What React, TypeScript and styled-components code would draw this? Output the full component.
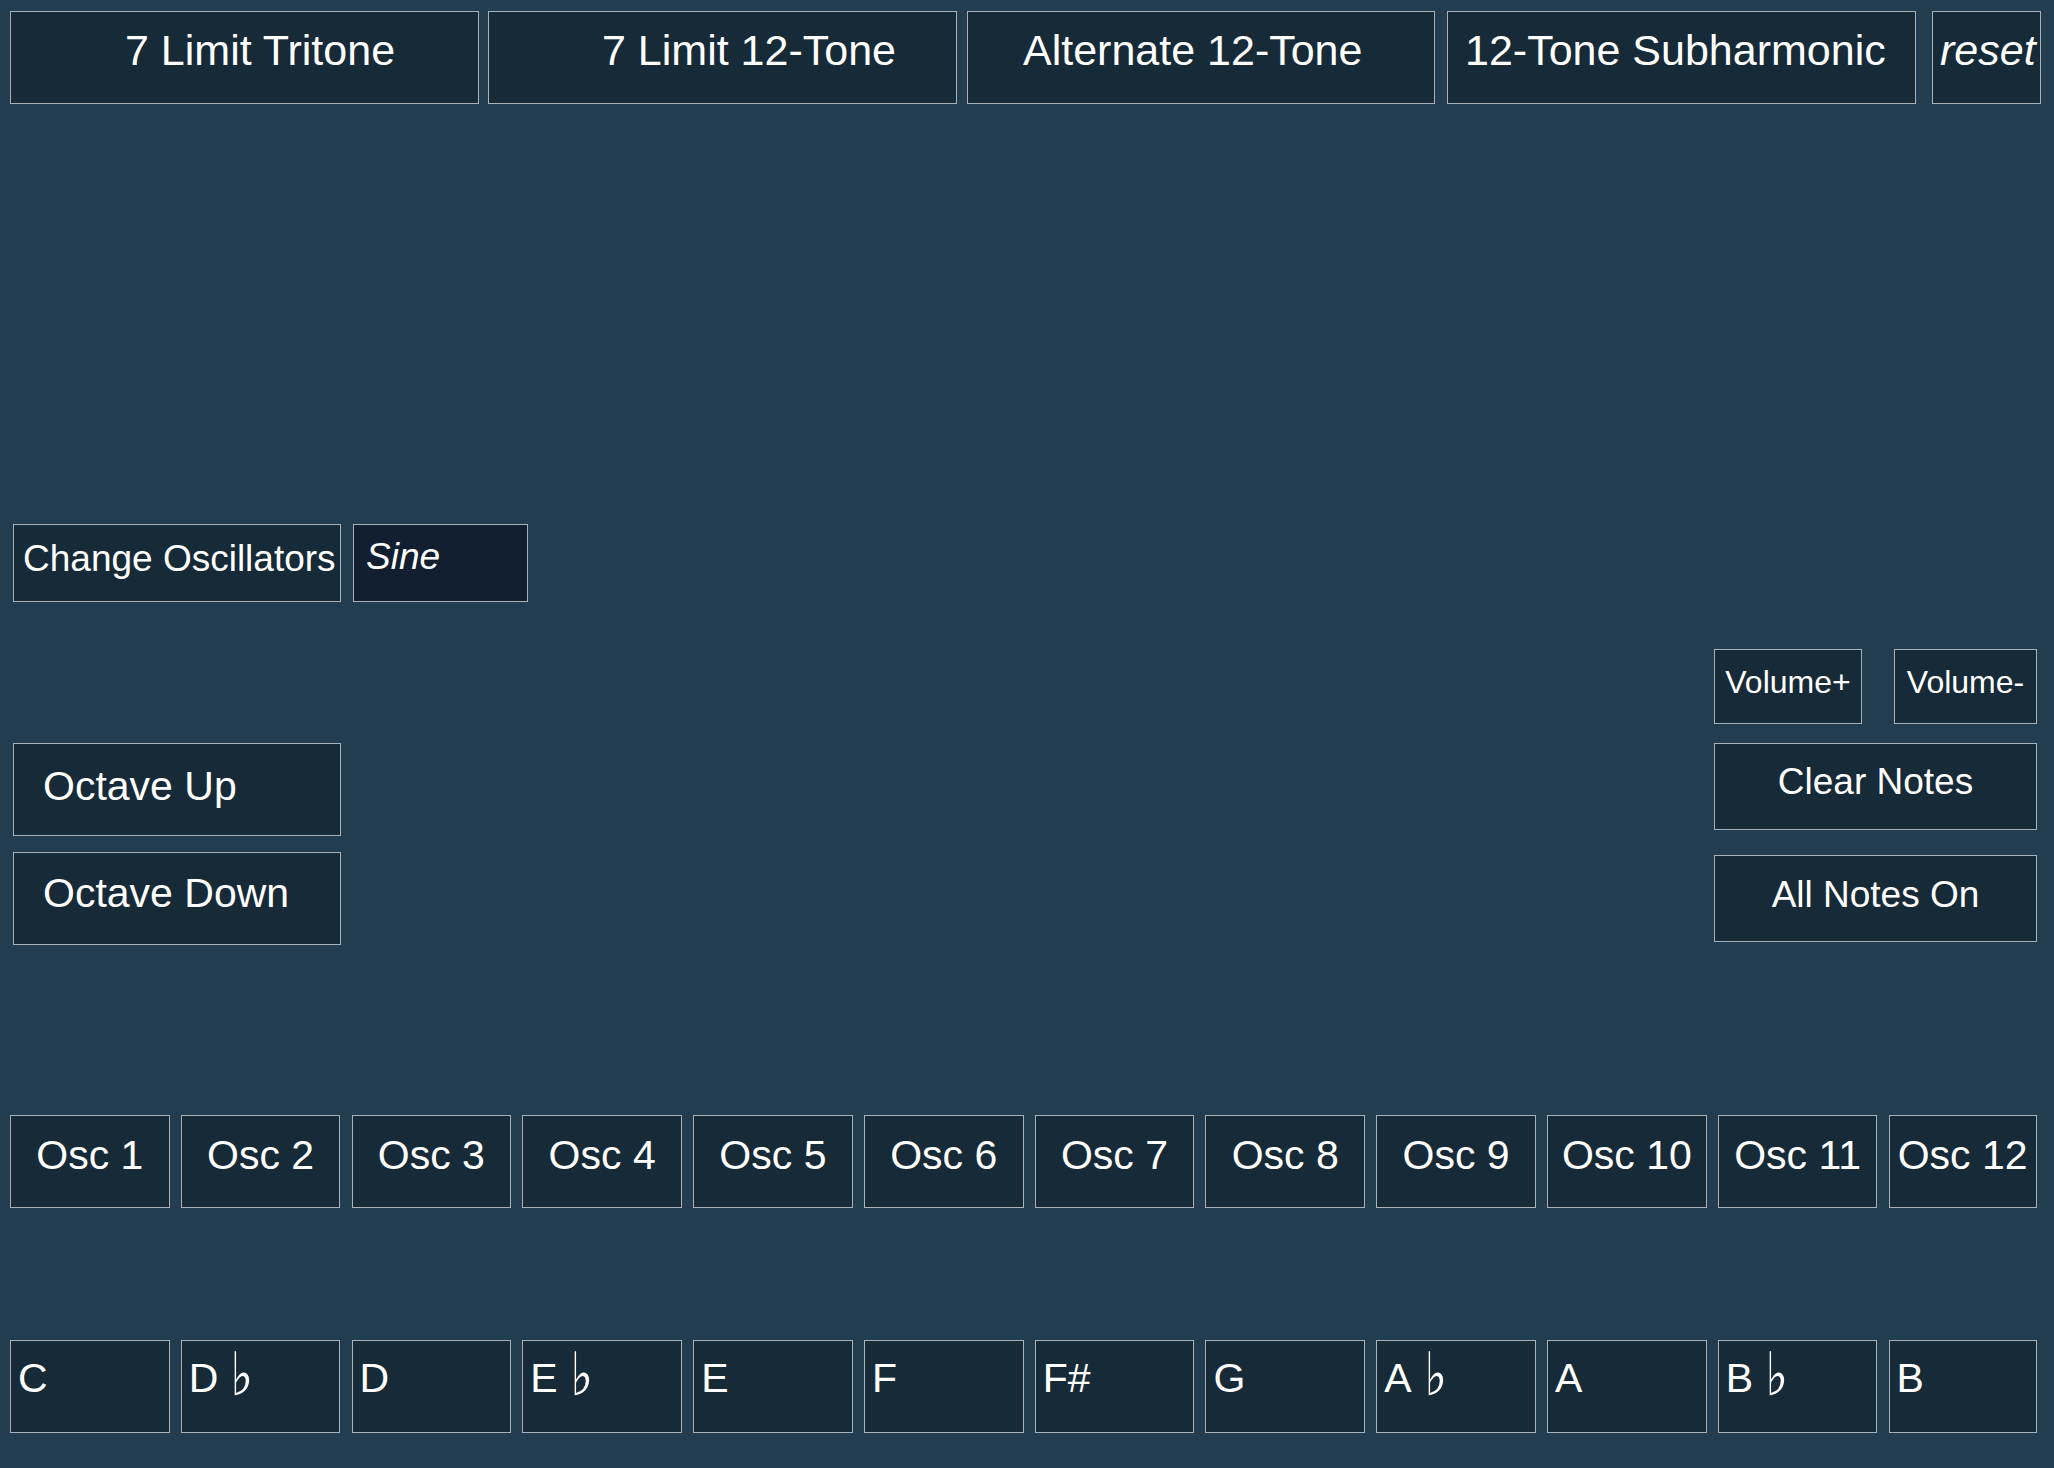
import React from "react";
import styled, { createGlobalStyle } from "styled-components";

const GlobalStyle = createGlobalStyle`
  html, body {
    margin: 0;
    padding: 0;
    background: #223d50;
  }
  body {
    font-family: "Liberation Sans", Arial, Helvetica, "DejaVu Sans", sans-serif;
    color: #ffffff;
  }
  * {
    box-sizing: border-box;
  }
`;

const Page = styled.div`
  width: 2054px;
  min-height: 1468px;
  padding: 11px 0 0 10px;
  display: flex;
  flex-direction: column;
  background: #223d50;
`;

const PanelButton = styled.button`
  display: flex;
  align-items: flex-start;
  margin: 0;
  padding: 0;
  background: #172a37;
  color: #ffffff;
  border: 1px solid #a9b1b6;
  border-radius: 0;
  font-family: inherit;
  font-weight: normal;
  white-space: nowrap;
  overflow: hidden;
  cursor: pointer;
  flex-shrink: 0;
`;

/* ---------- top preset bar ---------- */
const PresetBar = styled.div`
  display: flex;
  align-items: flex-start;
`;

const PresetButton = styled(PanelButton)<{
  $w: number;
  $ml: number;
  $indent: number;
  $italic?: boolean;
}>`
  width: ${(p) => p.$w}px;
  height: 93px;
  margin-left: ${(p) => p.$ml}px;
  padding: 13px 0 0 ${(p) => p.$indent}px;
  justify-content: flex-start;
  font-size: 43px;
  line-height: 50px;
  font-style: ${(p) => (p.$italic ? "italic" : "normal")};
`;

/* ---------- oscillator type row ---------- */
const OscTypeRow = styled.div`
  display: flex;
  gap: 12px;
  margin-top: 420px;
  padding-left: 3px;
`;

const ChangeButton = styled(PanelButton)`
  width: 328px;
  height: 78px;
  padding: 12px 0 0 9px;
  justify-content: flex-start;
  font-size: 37px;
  line-height: 44px;
`;

const WaveLabel = styled.div`
  width: 175px;
  height: 78px;
  padding: 10px 0 0 12px;
  background: #121f31;
  border: 1px solid #a9b1b6;
  font-size: 37px;
  line-height: 44px;
  font-style: italic;
`;

/* ---------- middle controls ---------- */
const Controls = styled.div`
  display: flex;
  justify-content: space-between;
  align-items: flex-start;
  margin-top: 47px;
  padding: 0 17px 0 3px;
`;

const LeftColumn = styled.div`
  display: flex;
  flex-direction: column;
  gap: 16px;
  padding-top: 94px;
`;

const OctaveButton = styled(PanelButton)<{ $pt: number }>`
  width: 328px;
  height: 93px;
  padding: ${(p) => p.$pt}px 0 0 29px;
  justify-content: flex-start;
  font-size: 41px;
  line-height: 48px;
`;

const RightColumn = styled.div`
  display: flex;
  flex-direction: column;
  width: 323px;
`;

const VolumeRow = styled.div`
  display: flex;
  gap: 32px;
`;

const VolumeButton = styled(PanelButton)<{ $w: number }>`
  width: ${(p) => p.$w}px;
  height: 75px;
  padding-top: 13px;
  justify-content: center;
  font-size: 32px;
  line-height: 38px;
`;

const ActionButton = styled(PanelButton)<{ $mt: number; $pt: number }>`
  width: 323px;
  height: 87px;
  margin-top: ${(p) => p.$mt}px;
  padding-top: ${(p) => p.$pt}px;
  justify-content: center;
  font-size: 37px;
  line-height: 44px;
`;

/* ---------- oscillator / note rows ---------- */
const KeyRow = styled.div<{ $mt: number }>`
  display: flex;
  gap: 11.2px;
  margin-top: ${(p) => p.$mt}px;
`;

const OscButton = styled(PanelButton)<{ $w: number }>`
  width: ${(p) => p.$w}px;
  height: 93px;
  padding-top: 15px;
  justify-content: center;
  font-size: 41px;
  line-height: 48px;
`;

const NoteButton = styled(PanelButton)<{ $w: number }>`
  width: ${(p) => p.$w}px;
  height: 93px;
  padding: 13px 0 0 7px;
  justify-content: flex-start;
  font-size: 41px;
  line-height: 48px;
`;

const Flat = styled.span`
  display: inline-block;
  margin-left: 12px;
  font-family: "DejaVu Sans", sans-serif;
  font-size: 50px;
  line-height: 48px;
  transform: scale(0.95, 1.2) translateY(-1px);
  transform-origin: 50% 70%;
`;

const presets = [
  { label: "7 Limit Tritone", w: 469, ml: 0, indent: 114 },
  { label: "7 Limit 12-Tone", w: 469, ml: 9, indent: 113 },
  { label: "Alternate 12-Tone", w: 468, ml: 10, indent: 55 },
  { label: "12-Tone Subharmonic", w: 469, ml: 12, indent: 17 },
];

const notes: { name: string; flat?: boolean }[] = [
  { name: "C" },
  { name: "D", flat: true },
  { name: "D" },
  { name: "E", flat: true },
  { name: "E" },
  { name: "F" },
  { name: "F#" },
  { name: "G" },
  { name: "A", flat: true },
  { name: "A" },
  { name: "B", flat: true },
  { name: "B" },
];

const keyWidth = (i: number) => (i === 11 ? 148 : 159.6);

export default function App() {
  return (
    <>
      <GlobalStyle />
      <Page>
        <PresetBar>
          {presets.map((p) => (
            <PresetButton key={p.label} $w={p.w} $ml={p.ml} $indent={p.indent}>
              {p.label}
            </PresetButton>
          ))}
          <PresetButton $w={109} $ml={16} $indent={7} $italic>
            reset
          </PresetButton>
        </PresetBar>

        <OscTypeRow>
          <ChangeButton>Change Oscillators</ChangeButton>
          <WaveLabel>Sine</WaveLabel>
        </OscTypeRow>

        <Controls>
          <LeftColumn>
            <OctaveButton $pt={18}>Octave Up</OctaveButton>
            <OctaveButton $pt={16}>Octave Down</OctaveButton>
          </LeftColumn>
          <RightColumn>
            <VolumeRow>
              <VolumeButton $w={148}>Volume+</VolumeButton>
              <VolumeButton $w={143}>Volume-</VolumeButton>
            </VolumeRow>
            <ActionButton $mt={19} $pt={16}>
              Clear Notes
            </ActionButton>
            <ActionButton $mt={25} $pt={17}>
              All Notes On
            </ActionButton>
          </RightColumn>
        </Controls>

        <KeyRow $mt={170}>
          {Array.from({ length: 12 }, (_, i) => (
            <OscButton key={i} $w={keyWidth(i)}>
              Osc {i + 1}
            </OscButton>
          ))}
        </KeyRow>

        <KeyRow $mt={132}>
          {notes.map((n, i) => (
            <NoteButton key={i} $w={keyWidth(i)}>
              {n.name}
              {n.flat && <Flat>♭</Flat>}
            </NoteButton>
          ))}
        </KeyRow>
      </Page>
    </>
  );
}
